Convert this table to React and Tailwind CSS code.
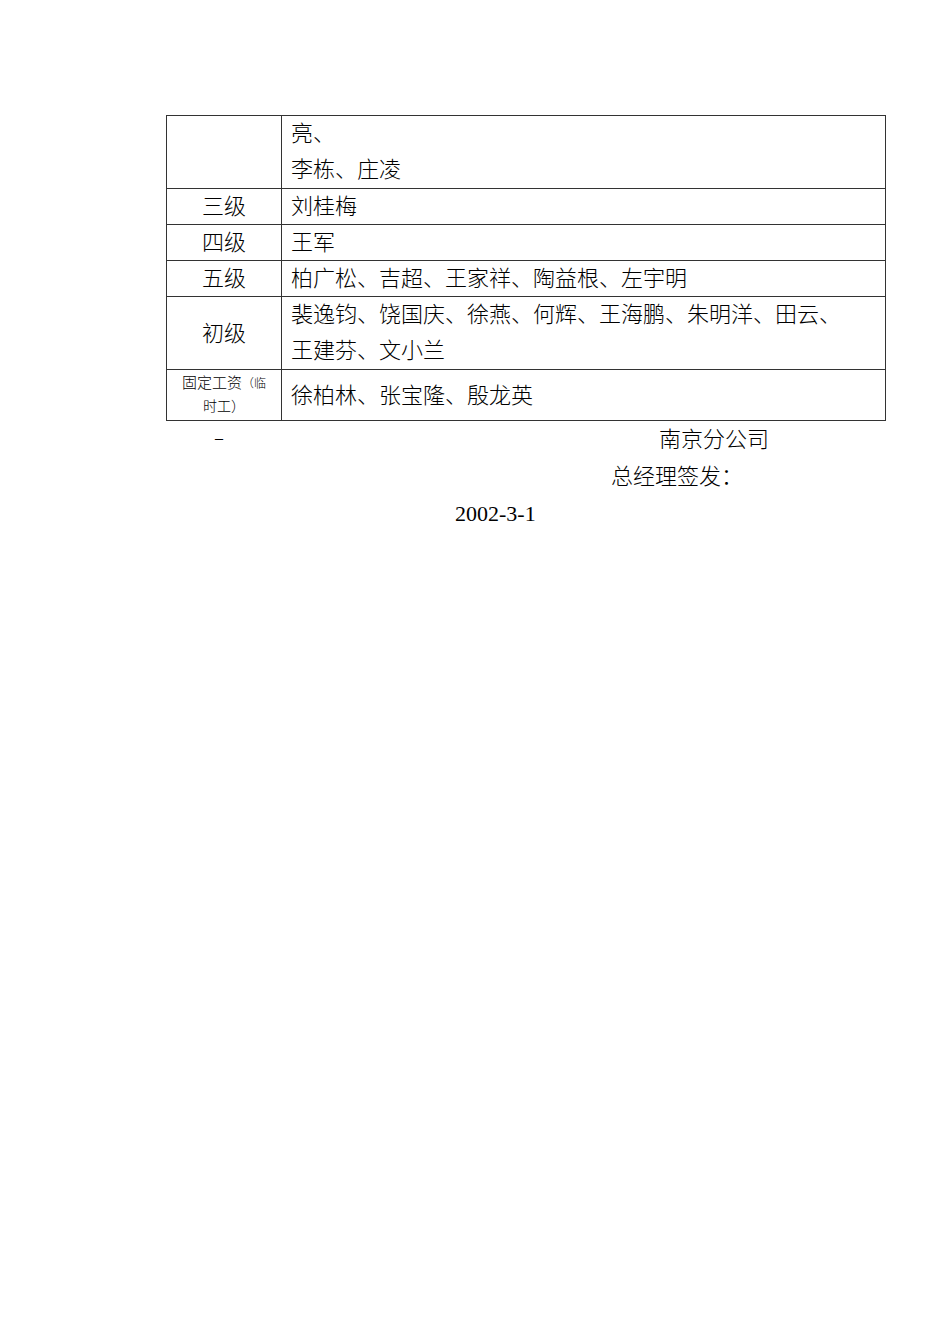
import React from 'react';

const rows = [
    { label: '', lines: ['亮、', '李栋、庄凌'] },
    { label: '三级', lines: ['刘桂梅'] },
    { label: '四级', lines: ['王军'] },
    { label: '五级', lines: ['柏广松、吉超、王家祥、陶益根、左宇明'] },
    { label: '初级', lines: ['裴逸钧、饶国庆、徐燕、何辉、王海鹏、朱明洋、田云、', '王建芬、文小兰'] },
];

const App = () => {
    return (
        <div className="min-h-[1344px] bg-white text-black pt-[115px] pl-[166px] font-['Liberation_Serif','Noto_Sans_CJK_SC',serif] font-light">
            <table className="border-collapse w-[720px] table-fixed text-[22px]">
                <colgroup>
                    <col className="w-[115px]" />
                    <col />
                </colgroup>
                <tbody>
                    {rows.map((row, i) => (
                        <tr key={i}>
                            <td className="border border-[#333] text-center align-middle p-0 leading-[35px]">{row.label}</td>
                            <td className="border border-[#333] pl-[9px] p-0">
                                {row.lines.map((line) => (
                                    <div key={line} className={row.lines.length > 1 ? 'leading-[36px]' : 'leading-[35px]'}>
                                        {line}
                                    </div>
                                ))}
                            </td>
                        </tr>
                    ))}
                    <tr>
                        <td className="border border-[#333] text-center align-middle h-[51px] p-0 text-[15px] leading-[22px]">
                            固定工资<span className="text-[12px]">（临</span>
                            <br />
                            <span className="text-[14px]">时工）</span>
                        </td>
                        <td className="border border-[#333] pl-[9px] p-0 align-middle">徐柏林、张宝隆、殷龙英</td>
                    </tr>
                </tbody>
            </table>

            {/* Signature block */}
            <div className="text-[22px] leading-[37px]">
                <div className="flex pl-[49px]">
                    <span className="w-[444px] text-[16px] -translate-y-[2px]">–</span>
                    <span>南京分公司</span>
                </div>
                <div className="pl-[445px]">总经理签发：</div>
                <div className="pl-[289px]">2002-3-1</div>
            </div>
        </div>
    );
};

export default App;
